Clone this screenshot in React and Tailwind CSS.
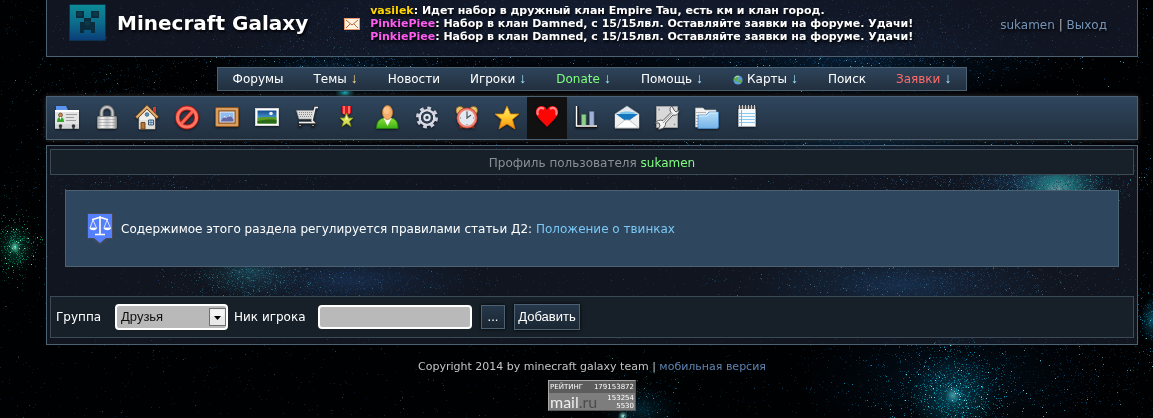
import React from "react";

const CLUSTERS = [
  // x, y, spread x, spread y, count, colour, highlight
  [1058, 188, 24, 12, 1100, "#22c8c0", "#c8e8e4"],
  [1020, 182, 60, 10, 500, "#1c80ac", "#4fd0d8"],
  [960, 182, 160, 12, 600, "#1f4c86", "#6bb5c8"],
  [250, 275, 32, 14, 700, "#178a98", "#68dcdc"],
  [340, 282, 70, 18, 1000, "#18508c", "#5db5c8"],
  [15, 247, 12, 16, 420, "#0a8a68", "#8effd0"],
  [953, 394, 30, 26, 1100, "#0590a8", "#8ffff5"],
  [960, 370, 80, 40, 700, "#0b4a70", "#7fc8cc"],
  [920, 282, 100, 18, 1300, "#1b5c8c", "#76c4cc"],
  [1080, 370, 50, 36, 400, "#0b3050", "#7a9f90"],
  [1152, 320, 8, 20, 160, "#0d6a88", "#5fe0d8"],
  [640, 405, 30, 24, 300, "#0a4a60", "#3aa0a8"],
  [330, 68, 70, 14, 700, "#0c4268", "#4fb0c0"],
  [860, 62, 90, 14, 900, "#103f68", "#6fb8c0"],
  [600, 35, 260, 20, 1100, "#1a4c80", "#5aa8c0"],
  [880, 25, 150, 24, 1100, "#1d4c7c", "#66a8c0"],
  [350, 25, 100, 24, 900, "#1d4c7c", "#5aa0c0"],
  [120, 92, 60, 24, 320, "#123c50", "#6f8f80"],
  [860, 143, 180, 8, 500, "#14507c", "#5fb0c8"],
  [250, 145, 120, 8, 260, "#14406c", "#4f90a8"],
  [150, 182, 100, 10, 400, "#17486c", "#5fb0b8"],
];

function makeStars() {
  let seed = 7;
  const rnd = () => {
    seed = (seed * 16807) % 2147483647;
    return seed / 2147483647;
  };
  const spread = () => (rnd() + rnd() + rnd() + rnd() - 2) * 1.9 * (0.35 + rnd());
  const layers = [];
  CLUSTERS.forEach(([cx, cy, sx, sy, n, color, highlight]) => {
    const paths = ["", "", ""];
    for (let i = 0; i < n; i++) {
      const tier = i % 20 === 0 ? 2 : i % 4 === 0 ? 1 : 0;
      paths[tier] += `M${Math.round(cx + spread() * sx)} ${Math.round(cy + spread() * sy)}h1v1h-1z`;
    }
    layers.push({ d: paths[0], color, opacity: 0.5 });
    layers.push({ d: paths[1], color, opacity: 0.95 });
    layers.push({ d: paths[2], color: highlight, opacity: 0.8 });
  });
  ["#0d2038", "#16303c", "#3a5a60"].forEach((color, k) => {
    let d = "";
    for (let i = 0; i < 2400 - k * 1080; i++) {
      d += `M${Math.round(rnd() * 1153)} ${Math.round(rnd() * 418)}h1v1h-1z`;
    }
    layers.push({ d, color, opacity: 0.7 });
  });
  return layers;
}
const STARS = makeStars();

const GLOWS = [
  // x, y, radius x, radius y, colour, strength
  [1040, 182, 80, 24, "#1a5a9c", 0.7],
  [1058, 186, 44, 26, "#22d8cc", 1],
  [1058, 186, 26, 18, "#22d8cc", 1],
  [1057, 190, 14, 10, "#ffffff", 1],
  [250, 272, 54, 26, "#1b8490", 0.6],
  [350, 280, 130, 36, "#12427c", 0.65],
  [15, 247, 20, 26, "#0b8a62", 0.5],
  [15, 247, 5, 6, "#9dffe2", 1],
  [953, 395, 44, 40, "#08899c", 0.7],
  [953, 395, 8, 9, "#a0fffa", 1],
  [950, 380, 150, 70, "#062036", 0.6],
  [900, 285, 160, 44, "#124a84", 0.65],
  [330, 70, 130, 34, "#08243c", 0.7],
  [345, 93, 10, 6, "#1fd0dc", 0.9],
  [850, 60, 220, 44, "#0a2a48", 0.65],
  [600, 20, 400, 60, "#0e2c58", 0.6],
  [860, 143, 240, 14, "#0c3458", 0.6],
  [640, 410, 40, 26, "#063848", 0.6],
  [623, 416, 5, 5, "#a0fff0", 1],
  [1152, 320, 12, 24, "#106c8c", 0.7],
];

function Starfield() {
  return (
    <svg
      aria-hidden="true"
      className="fixed inset-0 -z-10 h-full w-full bg-[#000103]"
      viewBox="0 0 1153 418"
      preserveAspectRatio="xMidYMid slice"
    >
      <defs>
        {GLOWS.map(([, , , , c, o], i) => (
          <radialGradient id={`glow${i}`} key={i}>
            <stop offset="0" stopColor={c} stopOpacity={o} />
            <stop offset=".45" stopColor={c} stopOpacity={o * 0.4} />
            <stop offset="1" stopColor={c} stopOpacity="0" />
          </radialGradient>
        ))}
      </defs>
      {GLOWS.map(([x, y, rx, ry], i) => (
        <ellipse key={i} cx={x} cy={y} rx={rx} ry={ry} fill={`url(#glow${i})`} />
      ))}
      {STARS.map((s, i) => (
        <path key={i} d={s.d} fill={s.color} opacity={s.opacity} />
      ))}
    </svg>
  );
}

function Creeper() {
  return (
    <svg viewBox="0 0 37 37" className="h-[37px] w-[37px] shrink-0" aria-hidden="true">
      <defs>
        <linearGradient id="creeper" x1="0" y1="0" x2="0" y2="1">
          <stop offset="0" stopColor="#0c8a96" />
          <stop offset=".5" stopColor="#0c6d8c" />
          <stop offset="1" stopColor="#0a3f78" />
        </linearGradient>
      </defs>
      <rect width="37" height="37" rx="1" fill="#0b4a66" opacity=".6" />
      <rect x="1" y="1" width="35" height="35" fill="url(#creeper)" />
      <path d="M7 7h8v7H7zM22 7h8v7h-8zM15 14h7v4h4v11h-4v-3h-7v3h-4V18h4z" fill="#0a2c3d" />
      <path d="M8 8h5v4H8zM24 8h5v4h-5zM16 17h5v4h-5z" fill="#0b3a4a" />
    </svg>
  );
}

function Envelope() {
  return (
    <svg viewBox="0 0 16 12" className="h-3 w-4 shrink-0" aria-hidden="true">
      <rect x=".5" y=".5" width="15" height="11" fill="#fff3df" stroke="#e8986c" />
      <path d="M2 2l6 5 6-5M2 10l4-4M14 10l-4-4" fill="none" stroke="#b8643c" />
    </svg>
  );
}

function Globe() {
  return (
    <svg viewBox="0 0 10 10" className="mr-1 inline-block h-[10px] w-[10px]" aria-hidden="true">
      <circle cx="5" cy="5" r="4.600" fill="#5d9be0" />
      <path d="M2 2c2-2 4-1 4 0S4 3 4 5 3 7 2 6 .5 4 2 2zM6 5c2-1 3 0 3 1S7 9 6 8 5 6 6 5z" fill="#5fae3c" />
      <path d="M2 3c1-2 3-2 4-1" stroke="#d6ecff" fill="none" opacity=".7" />
    </svg>
  );
}

const ICONS = {
  card: (
    <>
      <path d="M1 0h10l2 4H1z" fill="#5b93f0" />
      <path d="M0 4h24v18.500H0z" fill="#e3e3e3" />
      <path d="M0 4h24v2H0z" fill="#fff" />
      <path d="M11 8.500h11M11 11.500h8M11 14.500h10" stroke="#9d9d9d" />
      <circle cx="5.500" cy="9" r="2" fill="#c78647" stroke="#4b3523" strokeWidth=".6" />
      <path d="M2 16c0-4 2-5 3.500-5S9 12 9 16z" fill="#35a52b" />
      <path d="m4.500 11 1 3 1-3z" fill="#fff" />
      <path d="M0 18h24v4.500H0z" fill="#d4d4d4" />
      <circle cx="5.500" cy="20" r="1.800" fill="#30353b" />
      <circle cx="18.500" cy="20" r="1.800" fill="#30353b" />
      <path d="M4.500 21h2v2h-2zM17.500 21h2v2h-2z" fill="#30353b" />
    </>
  ),
  lock: (
    <>
      <path d="M6.500 11V6.500a5.500 5.500 0 0 1 11 0V11" fill="none" stroke="#777" strokeWidth="4" />
      <path d="M6.500 11V6.500a5.500 5.500 0 0 1 11 0V11" fill="none" stroke="#c4c4c4" strokeWidth="2" />
      <rect x="2.500" y="10.500" width="19" height="12" rx="1" fill="url(#metal)" stroke="#8a8a8a" />
      <path d="M3 13.500h18M3 16.500h18M3 19.500h18" stroke="#8d8d8d" strokeWidth=".5" />
    </>
  ),
  house: (
    <>
      <path d="M18 1h3v8h-3z" fill="#d93b32" />
      <path d="M4 11 12 3l8 8v12H4z" fill="#eeeeea" stroke="#b8b4ab" strokeWidth=".6" />
      <path d="M4 15h16M4 18h16M4 21h16" stroke="#c9c5bd" strokeWidth=".6" />
      <path d="M1 12 12 1l11 11" fill="none" stroke="#6d401b" strokeWidth="3.500" />
      <path d="M1.500 11.500 12 1l10.500 10.500" fill="none" stroke="#e1b070" strokeWidth="2" />
      <circle cx="12" cy="8.500" r="1.800" fill="#5c96c5" stroke="#41586b" strokeWidth=".8" />
      <path d="M6 16.500h4V23H6z" fill="#b67836" stroke="#77461a" />
      <path d="M13.500 14h5v5h-5z" fill="#b9d8ef" stroke="#3d5874" />
      <path d="M16 14v5M13.500 16.500h5" stroke="#3d5874" strokeWidth=".6" />
    </>
  ),
  ban: (
    <>
      <circle cx="12" cy="11.500" r="9.500" fill="none" stroke="#b71e15" strokeWidth="4.800" />
      <path d="m6.500 17.500 11-12" stroke="#b71e15" strokeWidth="4.400" />
      <circle cx="12" cy="11.500" r="9.500" fill="none" stroke="#ff7463" strokeWidth="3" />
      <path d="m6 18 12-13" stroke="#fa6654" strokeWidth="2.600" />
    </>
  ),
  frame: (
    <>
      <rect x=".5" y="1.500" width="23" height="19" rx="1" fill="#c88947" stroke="#8e531f" />
      <rect x="2" y="3" width="20" height="16" fill="none" stroke="#e6b378" />
      <rect x="4" y="5" width="16" height="12" fill="#f5f1eb" stroke="#7c4c23" />
      <rect x="5.500" y="6.500" width="13" height="9" fill="#8bbcf4" />
      <path d="m5.500 15.500 4-6 2 3 3-4 4 5v2z" fill="#6669a5" />
      <path d="m8 11.500 1.500-2 1.500 2zM13 10.500l1.500-2 1.500 2z" fill="#e7e9ff" />
    </>
  ),
  photo: (
    <>
      <rect x=".5" y="2.500" width="23" height="17" fill="#fff" stroke="#d4d4d4" />
      <rect x="2.500" y="4.500" width="19" height="13" fill="url(#sky)" />
      <path d="M2.500 12c6-2 12 0 19-1v6.500h-19z" fill="#5b9d24" />
      <path d="M2.500 15c6-1 12-2 19-1v3.500h-19z" fill="#2b6b17" />
      <circle cx="16" cy="7.500" r="1.800" fill="#fff" opacity=".9" />
    </>
  ),
  cart: (
    <>
      <path d="M23 1.500h-3L17 14.500l2 2H4" fill="none" stroke="#333" strokeWidth="3" />
      <path d="M1.500 4.500h17.500l-2 8.500H4z" fill="#ddd" stroke="#999" strokeWidth=".7" />
      <path d="M4 6.500h14M4 8.500h13M5 10.500h12" stroke="#888" strokeDasharray="1 1" />
      <path d="M23 1.500h-3L17 14.500l2 2H4" fill="none" stroke="#f2f2f2" strokeWidth="1.400" />
      <path d="M3 18h4v3H3zM16 18h4v3h-4z" fill="#222" />
      <path d="M4.500 19h1v1h-1zM17.500 19h1v1h-1z" fill="#fff" />
    </>
  ),
  medal: (
    <>
      <path d="M7 0h9v7l-4.500 3L7 7z" fill="#d81820" />
      <path d="M8 0h2v8H8zM13 0h2v7.500h-2z" fill="#ff6a63" />
      <path d="m11.500 7 2 5H18l-3.500 3.500L16 20.500l-4.500-3-4.500 3 1.500-5L5 12h4.500z" fill="#d5df57" stroke="#7e8c14" strokeWidth=".8" />
      <path d="m11.500 9.500 1.500 4h-3z" fill="#f8fa9b" />
    </>
  ),
  user: (
    <>
      <path d="M1.500 22.500c0-7 3-9.500 7-10.500h8c4 1 6.500 3.500 6.500 10.500z" fill="url(#green)" stroke="#23820f" strokeWidth=".8" />
      <path d="m8.500 12 4 8 4-8z" fill="#fff" />
      <ellipse cx="12.500" cy="6.500" rx="5" ry="7" fill="#f3ae69" stroke="#c47b34" strokeWidth=".8" />
      <ellipse cx="11.500" cy="4.500" rx="3" ry="3.500" fill="#ffc289" />
    </>
  ),
  gear: (
    <>
      <circle cx="12" cy="11.500" r="9.500" fill="none" stroke="#d0d0dc" strokeWidth="3" strokeDasharray="3.730 3.730" />
      <circle cx="12" cy="11.500" r="7.300" fill="none" stroke="#dcdce8" strokeWidth="2.600" />
      <circle cx="12" cy="11.500" r="6" fill="#2b3c50" />
      <circle cx="12" cy="11.500" r="2.700" fill="none" stroke="#e3e3ec" strokeWidth="2" />
    </>
  ),
  clock: (
    <>
      <circle cx="5" cy="4.500" r="4" fill="#e9c46e" stroke="#8e641b" strokeWidth=".7" />
      <circle cx="18.500" cy="4.500" r="4" fill="#e9c46e" stroke="#8e641b" strokeWidth=".7" />
      <path d="m5 22 3-3M19 22l-3-3" stroke="#922a20" strokeWidth="2.500" />
      <circle cx="12" cy="12" r="9.500" fill="#e4e8f0" stroke="#b3382a" strokeWidth="2" />
      <circle cx="12" cy="12" r="8.800" fill="none" stroke="#f08070" strokeWidth="2" />
      <path d="M12 6v6l4-3" fill="none" stroke="#4d545c" strokeWidth="1.200" />
      <path d="M12 5v1M12 18v1M5 12h1M18 12h1" stroke="#777" />
    </>
  ),
  star: (
    <path d="m12 0 3.500 8H24l-6.500 5.500L20 23l-8-5-8 5 2.500-9.500L0 8h8.500z" fill="url(#gold)" stroke="#d57c0c" strokeWidth=".8" />
  ),
  heart: (
    <>
      <path d="M12 21C9 17 1 12 1 6c0-7 9-8 11-2 2-6 11-5 11 2 0 6-8 11-11 15z" fill="#fb0505" />
      <path d="M3 9C1 4 5 0 9 3M21 9c2-5-2-9-6-6" fill="none" stroke="#ff8585" strokeWidth="2.200" />
    </>
  ),
  chart: (
    <>
      <path d="M6.500 8.500h4.500V20H6.500z" fill="#8fce8b" stroke="#4d8d4d" strokeWidth=".8" />
      <path d="M14.500 5.500H19V20h-4.500z" fill="#a0b1d7" stroke="#65779d" strokeWidth=".8" />
      <path d="M2 0v20.500h20" fill="none" stroke="#111" strokeWidth="3" />
      <path d="M1.500 0v20h20.500" fill="none" stroke="#fff" strokeWidth="1.500" />
    </>
  ),
  mail: (
    <>
      <path d="M0 8 12 0l12 8v14H0z" fill="#e5e8eb" stroke="#a4abb3" strokeWidth=".6" />
      <path d="M1 8h22l-8 6H9z" fill="#1476bd" />
      <path d="M4 7c4-2 12-2 17 0l-2 1H6z" fill="#7dc4eb" />
      <path d="m0 8 9 6-9 8zM24 8l-9 6 9 8z" fill="#f0f0f0" />
      <path d="m0 22 10-8h4l10 8z" fill="#fff" stroke="#b3bac2" strokeWidth=".8" />
    </>
  ),
  tools: (
    <>
      <path d="M1.500.500h21v21h-21z" fill="#d8d8d8" stroke="#b2b2b2" strokeWidth=".7" />
      <circle cx="4" cy="3.500" r="1" fill="#999" />
      <circle cx="19.500" cy="18.500" r="1" fill="#999" />
      <path d="M17 0c-3 2-2 5-1 6.500L8 14.500c-3-1-6 0-8 2.500l4 0 1 3-2 3c4 1 8-2 7.500-6L18 9c3 1 6-1 6-5l-3 2-2-2z" fill="#f2f2f2" stroke="#555" strokeWidth="1" />
      <path d="m8 17 9.500-10" stroke="#8a8a8a" strokeWidth=".9" />
    </>
  ),
  folder: (
    <>
      <path d="M.5 2h7.500l2 2h11v17H.5z" fill="#f2f2f2" stroke="#bbb" strokeWidth=".7" />
      <path d="M1 6.500h10M1 9.500h5M1 12.500h5M1 15.500h5M1 18.500h5" stroke="#b4b4b4" />
      <path d="M3 9h8l3-3h9.500v15l-1 1.500H3z" fill="url(#blue)" stroke="#4e8ecb" strokeWidth=".8" />
      <path d="M4 10h8l3-3h7.500" fill="none" stroke="#d8efff" />
    </>
  ),
  notepad: (
    <>
      <path d="M3.500 1.500h17v19h-17z" fill="#f8fbfd" stroke="#b2b8bd" strokeWidth=".7" />
      <path d="M3 0h18v3H3z" fill="#565656" />
      <path d="M4.500-1v4M7.500-1v4M10.500-1v4M13.500-1v4M16.500-1v4M19.500-1v4" stroke="#d4d4d4" />
      <path d="M4 7.500h17M4 10.500h17M4 13.500h17M4 16.500h17" stroke="#8bc9ee" />
      <path d="M6.500 4v17" stroke="#f08a82" />
    </>
  ),
};

const TOOLS = [
  ["card", "Профиль"], ["lock", "Безопасность"], ["house", "Дом"], ["ban", "Блокировки"],
  ["frame", "Галерея"], ["photo", "Фотографии"], ["cart", "Магазин"], ["medal", "Награды"],
  ["user", "Персонаж"], ["gear", "Настройки"], ["clock", "История"], ["star", "Избранное"],
  ["heart", "Друзья"], ["chart", "Статистика"], ["mail", "Почта"], ["tools", "Инструменты"],
  ["folder", "Файлы"], ["notepad", "Заметки"],
];

function IconGradients() {
  const stops = (id, list, vertical = true) => (
    <linearGradient id={id} x1="0" y1="0" x2={vertical ? "0" : "1"} y2={vertical ? "1" : "0"}>
      {list.map((c, i) => (
        <stop key={i} offset={i / (list.length - 1)} stopColor={c} />
      ))}
    </linearGradient>
  );
  return (
    <svg className="absolute h-0 w-0" aria-hidden="true">
      <defs>
        {stops("metal", ["#a5a5a5", "#f4f4f4", "#c4c4c4", "#eeeeee", "#8c8c8c"], false)}
        {stops("sky", ["#174a8c", "#3e8cc8", "#bfe4f5"])}
        {stops("green", ["#8ce03a", "#39b112"])}
        {stops("gold", ["#fff07a", "#ffcb2e", "#f88a0c"])}
        {stops("blue", ["#b8def9", "#74b2e8"])}
      </defs>
    </svg>
  );
}

const NAV = [
  { label: "Форумы" },
  { label: "Темы", arrow: "text-[#ffd98a]" },
  { label: "Новости" },
  { label: "Игроки", arrow: "text-[#9fe4ff]" },
  { label: "Donate", arrow: "text-[#9fe4ff]", color: "text-[#80ff80]" },
  { label: "Помощь", arrow: "text-[#9fe4ff]" },
  { label: "Карты", arrow: "text-[#9fe4ff]", globe: true },
  { label: "Поиск" },
  { label: "Заявки", arrow: "text-[#9fe4ff]", color: "text-[#ff6a6a]" },
];

const NEWS = [
  ["vasilek", "text-[#ffd500]", "Идет набор в дружный клан Empire Tau, есть км и клан город."],
  ["PinkiePiee", "text-[#ff5cf0]", "Набор в клан Damned, с 15/15лвл. Оставляйте заявки на форуме. Удачи!"],
  ["PinkiePiee", "text-[#ff5cf0]", "Набор в клан Damned, с 15/15лвл. Оставляйте заявки на форуме. Удачи!"],
];

function Scales() {
  return (
    <svg viewBox="0 0 26 32" className="h-8 w-[26px] shrink-0" aria-hidden="true">
      <path d="M0 0h26v26h-6l-7 6-7-6H0z" fill="#474b58" />
      <path d="M1 1h24v24h-6l-6 5-6-5H1z" fill="#5680fb" />
      <path d="M13 3v18M5 6.500c3 0 5-2 8-2s5 2 8 2M8 21.500h10" fill="none" stroke="#fff" strokeWidth="1.600" />
      <path d="m6 7-3 8h6.500zM20 7l-3 8h6.500z" fill="none" stroke="#fff" strokeWidth=".8" />
      <path d="M2.500 15h7.500c-1 3-6.500 3-7.500 0zM16.500 15H24c-1 3-6.500 3-7.500 0z" fill="#fff" />
    </svg>
  );
}

function Counter() {
  return (
    <a
      href="#rating"
      className="block h-[31px] w-[88px] overflow-hidden border border-[#a9a9a9] border-r-[#555] border-b-[#555] bg-[#7d7d7d] font-['DejaVu_Sans',sans-serif] text-[7px] text-white"
    >
      <span className="flex h-3 items-center justify-between bg-[#5c5c5c] px-px">
        <span>РЕЙТИНГ</span>
        <span>179153872</span>
      </span>
      <span className="flex h-[17px] items-center justify-between px-px">
        <span className="font-['Lato',sans-serif] text-base leading-4 text-[#eee]">
          mail<span className="text-[#4c4c4c]">.ru</span>
        </span>
        <span className="text-right leading-2">
          153254
          <br />
          5530
        </span>
      </span>
    </a>
  );
}

const BTN =
  "border border-[#4c6272] bg-linear-to-b from-[#26384b] to-[#1a2632] font-['Liberation_Sans',sans-serif] text-[13px] text-white shadow-[0_0_4px_#000]";

export default function App() {
  return (
    <div className="isolate min-h-screen pr-[15px] pl-[46px] font-['DejaVu_Sans',sans-serif] text-xs leading-4 text-white">
      <Starfield />
      <IconGradients />

      <header className="flex h-[57px] items-start border border-t-0 border-[#4c6272] bg-[#1a2132]/65 pr-[30px] pl-[22px] [text-shadow:1px_2px_3px_#000]">
        <div className="flex items-center gap-[11px] pt-1">
          <Creeper />
          <h1 className="text-xl font-bold whitespace-nowrap">Minecraft Galaxy</h1>
        </div>
        <div className="ml-9 flex items-center gap-[10px] pt-1">
          <Envelope />
          <ul className="text-[11px] leading-[13px] font-bold whitespace-nowrap">
            {NEWS.map(([who, color, text], i) => (
              <li key={i}>
                <span className={color}>{who}</span>: {text}
              </li>
            ))}
          </ul>
        </div>
        <p className="ml-auto pt-[17px] whitespace-nowrap text-[#b9b9b9]">
          <a href="#user" className="text-[#7594b8]">sukamen</a> |{" "}
          <a href="#logout" className="text-[#7594b8]">Выход</a>
        </p>
      </header>

      <nav className="mx-auto mt-[10px] flex h-6 w-fit items-center border border-[#4c6272] bg-linear-to-b from-[#2e445b] to-[#22303f]">
        {NAV.map((n) => (
          <a key={n.label} href="#nav" className={`px-[15px] whitespace-nowrap ${n.color || "text-white"}`}>
            {n.globe && <Globe />}
            {n.label}
            {n.arrow && (
              <span className={`ml-1 font-['Liberation_Sans',sans-serif] text-sm leading-none font-bold ${n.arrow}`}>↓</span>
            )}
          </a>
        ))}
      </nav>

      <nav className="mt-[5px] flex h-11 border border-[#4c6272] bg-linear-to-b from-[#2f465e] to-[#212f3e] shadow-[0_0_5px_#333]">
        {TOOLS.map(([id, title]) => (
          <a
            key={id}
            href={`#${id}`}
            aria-label={title}
            className={`flex w-10 items-center justify-center ${id === "heart" ? "bg-[#111]" : ""}`}
          >
            <svg viewBox="0 0 24 24" className="h-6 w-6 overflow-visible drop-shadow-[0_1px_1px_#0008]" aria-hidden="true">
              {ICONS[id]}
            </svg>
          </a>
        ))}
      </nav>

      <main className="mt-[5px] border border-[#4c6272] bg-[#222a3b]/50 px-[3px] pt-[3px] pb-[6px]">
        <h2 className="border border-[#3a4b57] bg-[#172029] pt-[5px] pb-[3px] text-center text-[#8b8f93]">
          Профиль пользователя <a href="#user" className="text-[#80ff80]">sukamen</a>
        </h2>
        <section className="mx-[15px] mt-[15px] flex h-[77px] items-center gap-2 border border-[#4c6272] bg-[#2e475f] px-[21px]">
          <Scales />
          <p>
            Содержимое этого раздела регулируется правилами статьи Д2:{" "}
            <a href="#rules" className="text-[#7ac8f5]">Положение о твинках</a>
          </p>
        </section>
        <form
          onSubmit={(e) => e.preventDefault()}
          className="mt-[29px] flex h-[42px] items-center border border-[#3a4b57] bg-[#172029] px-[5px]"
        >
          <label htmlFor="group" className="w-[59px]">Группа</label>
          <div className="relative">
            <select
              id="group"
              className="block h-[26px] w-[113px] appearance-none rounded-[4px] border-2 border-white bg-[#b9b9b9] pl-1 font-['Liberation_Sans',sans-serif] text-[13px] text-[#111]"
            >
              <option>Друзья</option>
            </select>
            <svg viewBox="0 0 17 18" className="pointer-events-none absolute top-1 right-[2px] h-[18px] w-[17px]" aria-hidden="true">
              <rect x=".5" y=".5" width="16" height="17" fill="#e9e9e9" stroke="#707070" />
              <path d="M1.500 1.500h14v7h-14z" fill="#f5f5f5" />
              <path d="M5 8h7l-3.500 4z" fill="#000" />
            </svg>
          </div>
          <label htmlFor="nick" className="ml-[6px] w-[84px]">Ник игрока</label>
          <input
            id="nick"
            type="text"
            className="h-6 w-[154px] rounded-[4px] border-2 border-white bg-[#b9b9b9] px-1 text-[#111]"
          />
          <button type="button" className={`ml-[9px] h-6 w-6 ${BTN}`}>...</button>
          <button type="submit" className={`ml-[9px] h-[26px] w-[66px] ${BTN}`}>Добавить</button>
        </form>
      </main>

      <footer className="flex flex-col items-center gap-[5px] pt-[14px] pb-[7px] text-[11px] leading-4 text-[#c4c4c4]">
        <p>
          Copyright 2014 by minecraft galaxy team |{" "}
          <a href="#mobile" className="text-[#5f84b0]">мобильная версия</a>
        </p>
        <Counter />
      </footer>
    </div>
  );
}
